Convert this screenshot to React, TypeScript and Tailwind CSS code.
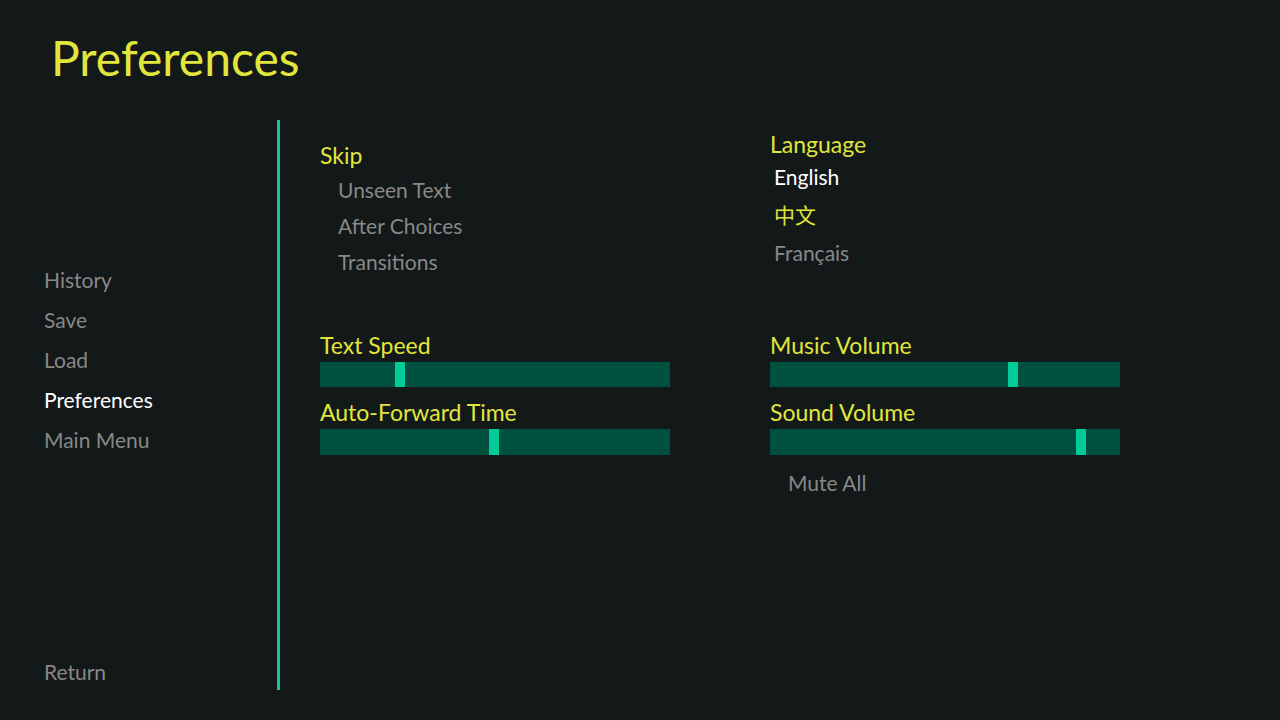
import React from "react";

const font = { fontFamily: 'Lato, "Noto Sans CJK SC", sans-serif' };

function NavItem({ label, active }: { label: string; active?: boolean }) {
  return (
    <div
      className={`h-[40px] leading-[40px] text-[21px] ${
        active ? "text-white" : "text-[#888888]"
      }`}
    >
      {label}
    </div>
  );
}

function Label({ children }: { children: React.ReactNode }) {
  return (
    <div className="h-[34px] leading-[34px] text-[23px] text-[#e1e63c]">
      {children}
    </div>
  );
}

function Bar({ pos, h }: { pos: number; h: string }) {
  return (
    <div className={`relative w-[350px] ${h} bg-[#005040]`}>
      <div
        className="absolute top-0 h-full w-[10px] bg-[#00cc99]"
        style={{ left: pos }}
      />
    </div>
  );
}

export default function App() {
  return (
    <div
      className="w-[1280px] h-[720px] bg-[#131819] flex flex-col overflow-hidden"
      style={font}
    >
      <div className="h-[120px] pl-[51px] pt-[26px]">
        <div className="text-[48px] leading-[64px] text-[#e1e63c]">
          Preferences
        </div>
      </div>

      <div className="flex h-[570px]">
        {/* navigation column */}
        <div className="w-[277px] flex flex-col pl-[44px] pt-[140px]">
          <NavItem label="History" />
          <NavItem label="Save" />
          <NavItem label="Load" />
          <NavItem label="Preferences" active />
          <NavItem label="Main Menu" />
          <div className="mt-auto h-[36px] leading-[36px] text-[21px] text-[#888888]">
            Return
          </div>
        </div>

        <div className="w-[3px] bg-[#19c590]" />

        {/* settings */}
        <div className="flex pl-[40px]">
          <div className="w-[450px] flex flex-col pt-[18px]">
            <Label>Skip</Label>
            <div className="pl-[18px] text-[21px] text-[#888888]">
              <div className="h-[36px] leading-[36px]">Unseen Text</div>
              <div className="h-[36px] leading-[36px]">After Choices</div>
              <div className="h-[36px] leading-[36px]">Transitions</div>
            </div>
            <div className="mt-[48px]">
              <Label>Text Speed</Label>
            </div>
            <Bar pos={75} h="h-[25px]" />
            <div className="mt-[8px]">
              <Label>Auto-Forward Time</Label>
            </div>
            <Bar pos={169} h="h-[26px]" />
          </div>

          <div className="w-[350px] flex flex-col pt-[7px]">
            <Label>Language</Label>
            <div className="-mt-[3px] pl-[4px] text-[21px]">
              <div className="h-[38px] leading-[38px] text-white">English</div>
              <div className="h-[38px] leading-[38px] text-[#e1e63c]">中文</div>
              <div className="h-[38px] leading-[38px] text-[#888888]">Français</div>
            </div>
            <div className="mt-[56px]">
              <Label>Music Volume</Label>
            </div>
            <Bar pos={238} h="h-[25px]" />
            <div className="mt-[8px]">
              <Label>Sound Volume</Label>
            </div>
            <Bar pos={306} h="h-[26px]" />
            <div className="mt-[10px] pl-[18px] h-[36px] leading-[36px] text-[21px] text-[#888888]">
              Mute All
            </div>
          </div>
        </div>
      </div>
    </div>
  );
}
